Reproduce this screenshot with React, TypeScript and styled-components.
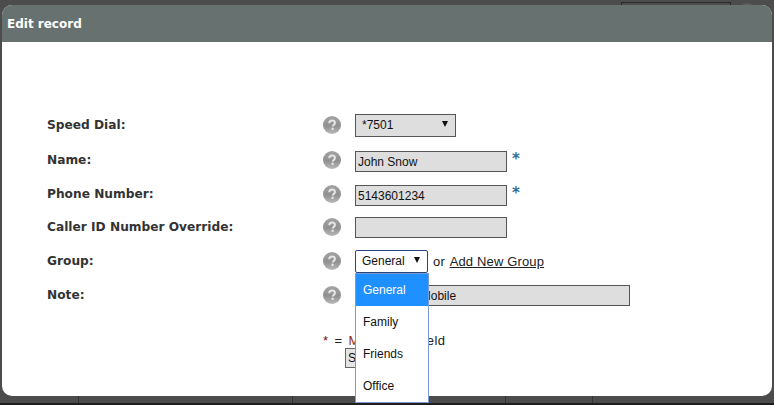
import React from "react";
import styled, { createGlobalStyle } from "styled-components";

const GlobalStyle = createGlobalStyle`
  html, body {
    margin: 0;
    padding: 0;
    height: 100%;
    background: #4c4c4c;
    overflow: hidden;
  }
`;

const Page = styled.div`
  position: relative;
  width: 774px;
  height: 405px;
  background: #4c4c4c;
  overflow: hidden;
`;

// what shows of the page behind the dialog
const TopBox = styled.div`
  position: absolute;
  left: 621px;
  top: 2px;
  width: 110px;
  height: 6px;
  border: 1px solid #2c2c2c;
  box-sizing: border-box;
`;

const TopDot = styled.div`
  position: absolute;
  left: 737px;
  top: 3px;
  width: 20px;
  height: 20px;
  border-radius: 50%;
  background: #5c5c5c;
`;

const BackRow = styled.div`
  position: absolute;
  left: 0;
  right: 0;
  bottom: 0;
  height: 9px;
  display: grid;
  grid-template-columns: 79px 214px 213px 87px 1fr;
  border-bottom: 2px solid #1d1d1d;
  box-sizing: border-box;
`;

const BackCell = styled.div`
  border-right: 1px solid #333;
  &:last-child {
    border-right: 0;
  }
`;

const Dialog = styled.div`
  position: absolute;
  left: 2px;
  top: 5px;
  width: 770px;
  height: 391px;
  background: #fff;
  border-radius: 10px;
`;

const Header = styled.div`
  height: 37px;
  box-sizing: border-box;
  background: #667170;
  border-radius: 10px 10px 0 0;
  color: #fff;
  font: bold 12px/38px "DejaVu Sans", sans-serif;
  padding-left: 5px;
`;

const Form = styled.div`
  padding: 66px 0 0 45px;
  display: flex;
  flex-direction: column;
`;

const Row = styled.div<{ $gap?: number }>`
  display: flex;
  align-items: center;
  height: 34px;
  margin-top: ${(p) => p.$gap ?? 0}px;
`;

const Label = styled.div`
  width: 276px;
  font: bold 12.2px "DejaVu Sans", sans-serif;
  color: #333;
`;

const Help = styled.svg`
  width: 18px;
  height: 18px;
  margin-right: 14px;
  flex: none;
`;

const TextInput = styled.input<{ $w: number; $drop?: number }>`
  width: ${(p) => p.$w}px;
  height: 21px;
  margin-top: ${(p) => p.$drop ?? 0}px;
  box-sizing: border-box;
  border: 1px solid #555;
  background: #dedede;
  padding: 1px 2px 0;
  font: 12px "Liberation Sans", Arial, sans-serif;
  color: #111;
  outline: none;
`;

const Select = styled.div<{ $w: number; $open?: boolean }>`
  width: ${(p) => p.$w}px;
  height: 23px;
  box-sizing: border-box;
  display: flex;
  align-items: center;
  justify-content: space-between;
  padding: 0 7px 0 6px;
  font: 12px "Liberation Sans", Arial, sans-serif;
  color: #111;
  background: ${(p) => (p.$open ? "#fff" : "#dedede")};
  border: 1px solid ${(p) => (p.$open ? "#27467f" : "#555")};
  border-radius: ${(p) => (p.$open ? "2px" : "0")};
`;

const Caret = styled.span`
  width: 0;
  height: 0;
  margin-bottom: 2px;
  border-left: 3.5px solid transparent;
  border-right: 3.5px solid transparent;
  border-top: 6px solid #111;
`;

const Required = styled.span`
  color: #2b6f97;
  font: bold 15px "DejaVu Sans", sans-serif;
  margin: -2px 0 0 5px;
`;

const Or = styled.span`
  font: 13px "Liberation Sans", Arial, sans-serif;
  letter-spacing: 0.15px;
  color: #222;
  margin-left: 5px;
`;

const AddLink = styled.a`
  color: #222;
  text-decoration: underline;
  margin-left: 1px;
`;

const SelectWrap = styled.div`
  position: relative;
`;

const Menu = styled.div`
  position: absolute;
  z-index: 2;
  left: 0;
  top: 23px;
  width: 74px;
  box-sizing: border-box;
  background: #fff;
  border: 1px solid #7a9bd6;
`;

const MenuItem = styled.div<{ $active?: boolean }>`
  height: 32px;
  padding-left: 7px;
  font: 12px/32px "Liberation Sans", Arial, sans-serif;
  background: ${(p) => (p.$active ? "#1e90ff" : "#fff")};
  color: ${(p) => (p.$active ? "#fff" : "#111")};
`;

const Footer = styled.div`
  margin-left: 276px;
  padding-top: 21px;
  font: 13px/15px "Liberation Sans", Arial, sans-serif;
  letter-spacing: 0.4px;
  word-spacing: 2px;
  color: #222;
`;

const Star = styled.span`
  color: #7a1515;
`;

const Mandatory = styled.span`
  color: #8a2a10;
`;

const SaveButton = styled.button`
  display: block;
  margin: 0 0 0 22px;
  width: 60px;
  height: 20px;
  padding: 0 2px;
  text-align: left;
  box-sizing: border-box;
  border: 1px solid #666;
  background: #e4e4e4;
  font: 12px "Liberation Sans", Arial, sans-serif;
  color: #111;
`;

const HelpIcon = ({ id }: { id: string }) => (
  <Help viewBox="0 0 18 18">
    <defs>
      <linearGradient id={id} x1="0" y1="0" x2="0" y2="1">
        <stop offset="0" stopColor="#a4a4a4" />
        <stop offset="0.55" stopColor="#909090" />
        <stop offset="1" stopColor="#bababa" />
      </linearGradient>
    </defs>
    <circle cx="9" cy="9" r="9" fill={`url(#${id})`} />
    <path
      d="M6.3 7.2C6.3 5.6 7.5 4.6 9.1 4.6c1.6 0 2.8 1 2.8 2.4 0 1.9-2.2 2-2.2 3.6"
      fill="none"
      stroke="#e6e6e6"
      strokeWidth="2"
    />
    <rect x="8.5" y="11.7" width="2.2" height="2.2" fill="#e6e6e6" />
  </Help>
);

export default function App() {
  return (
    <Page>
      <GlobalStyle />
      <TopBox />
      <TopDot />
      <BackRow>
        <BackCell />
        <BackCell />
        <BackCell />
        <BackCell />
        <BackCell />
      </BackRow>
      <Dialog>
        <Header>Edit record</Header>
        <Form>
          <Row>
            <Label>Speed Dial:</Label>
            <HelpIcon id="h1" />
            <Select $w={101}>
              *7501
              <Caret />
            </Select>
          </Row>
          <Row $gap={1}>
            <Label>Name:</Label>
            <HelpIcon id="h2" />
            <TextInput $w={152} $drop={3} defaultValue="John Snow" />
            <Required>*</Required>
          </Row>
          <Row>
            <Label>Phone Number:</Label>
            <HelpIcon id="h3" />
            <TextInput $w={152} $drop={2} defaultValue="5143601234" />
            <Required>*</Required>
          </Row>
          <Row $gap={-1}>
            <Label>Caller ID Number Override:</Label>
            <HelpIcon id="h4" />
            <TextInput $w={152} $drop={1} />
          </Row>
          <Row>
            <Label>Group:</Label>
            <HelpIcon id="h5" />
            <SelectWrap>
              <Select $w={73} $open>
                General
                <Caret />
              </Select>
              <Menu>
                <MenuItem $active>General</MenuItem>
                <MenuItem>Family</MenuItem>
                <MenuItem>Friends</MenuItem>
                <MenuItem>Office</MenuItem>
              </Menu>
            </SelectWrap>
            <Or>
              or <AddLink>Add New Group</AddLink>
            </Or>
          </Row>
          <Row>
            <Label>Note:</Label>
            <HelpIcon id="h6" />
            <TextInput $w={275} $drop={1} defaultValue="John Snow Mobile" />
          </Row>
          <Footer>
            <Star>*</Star> = <Mandatory>Mandatory</Mandatory> field
            <SaveButton>Save</SaveButton>
          </Footer>
        </Form>
      </Dialog>
    </Page>
  );
}
